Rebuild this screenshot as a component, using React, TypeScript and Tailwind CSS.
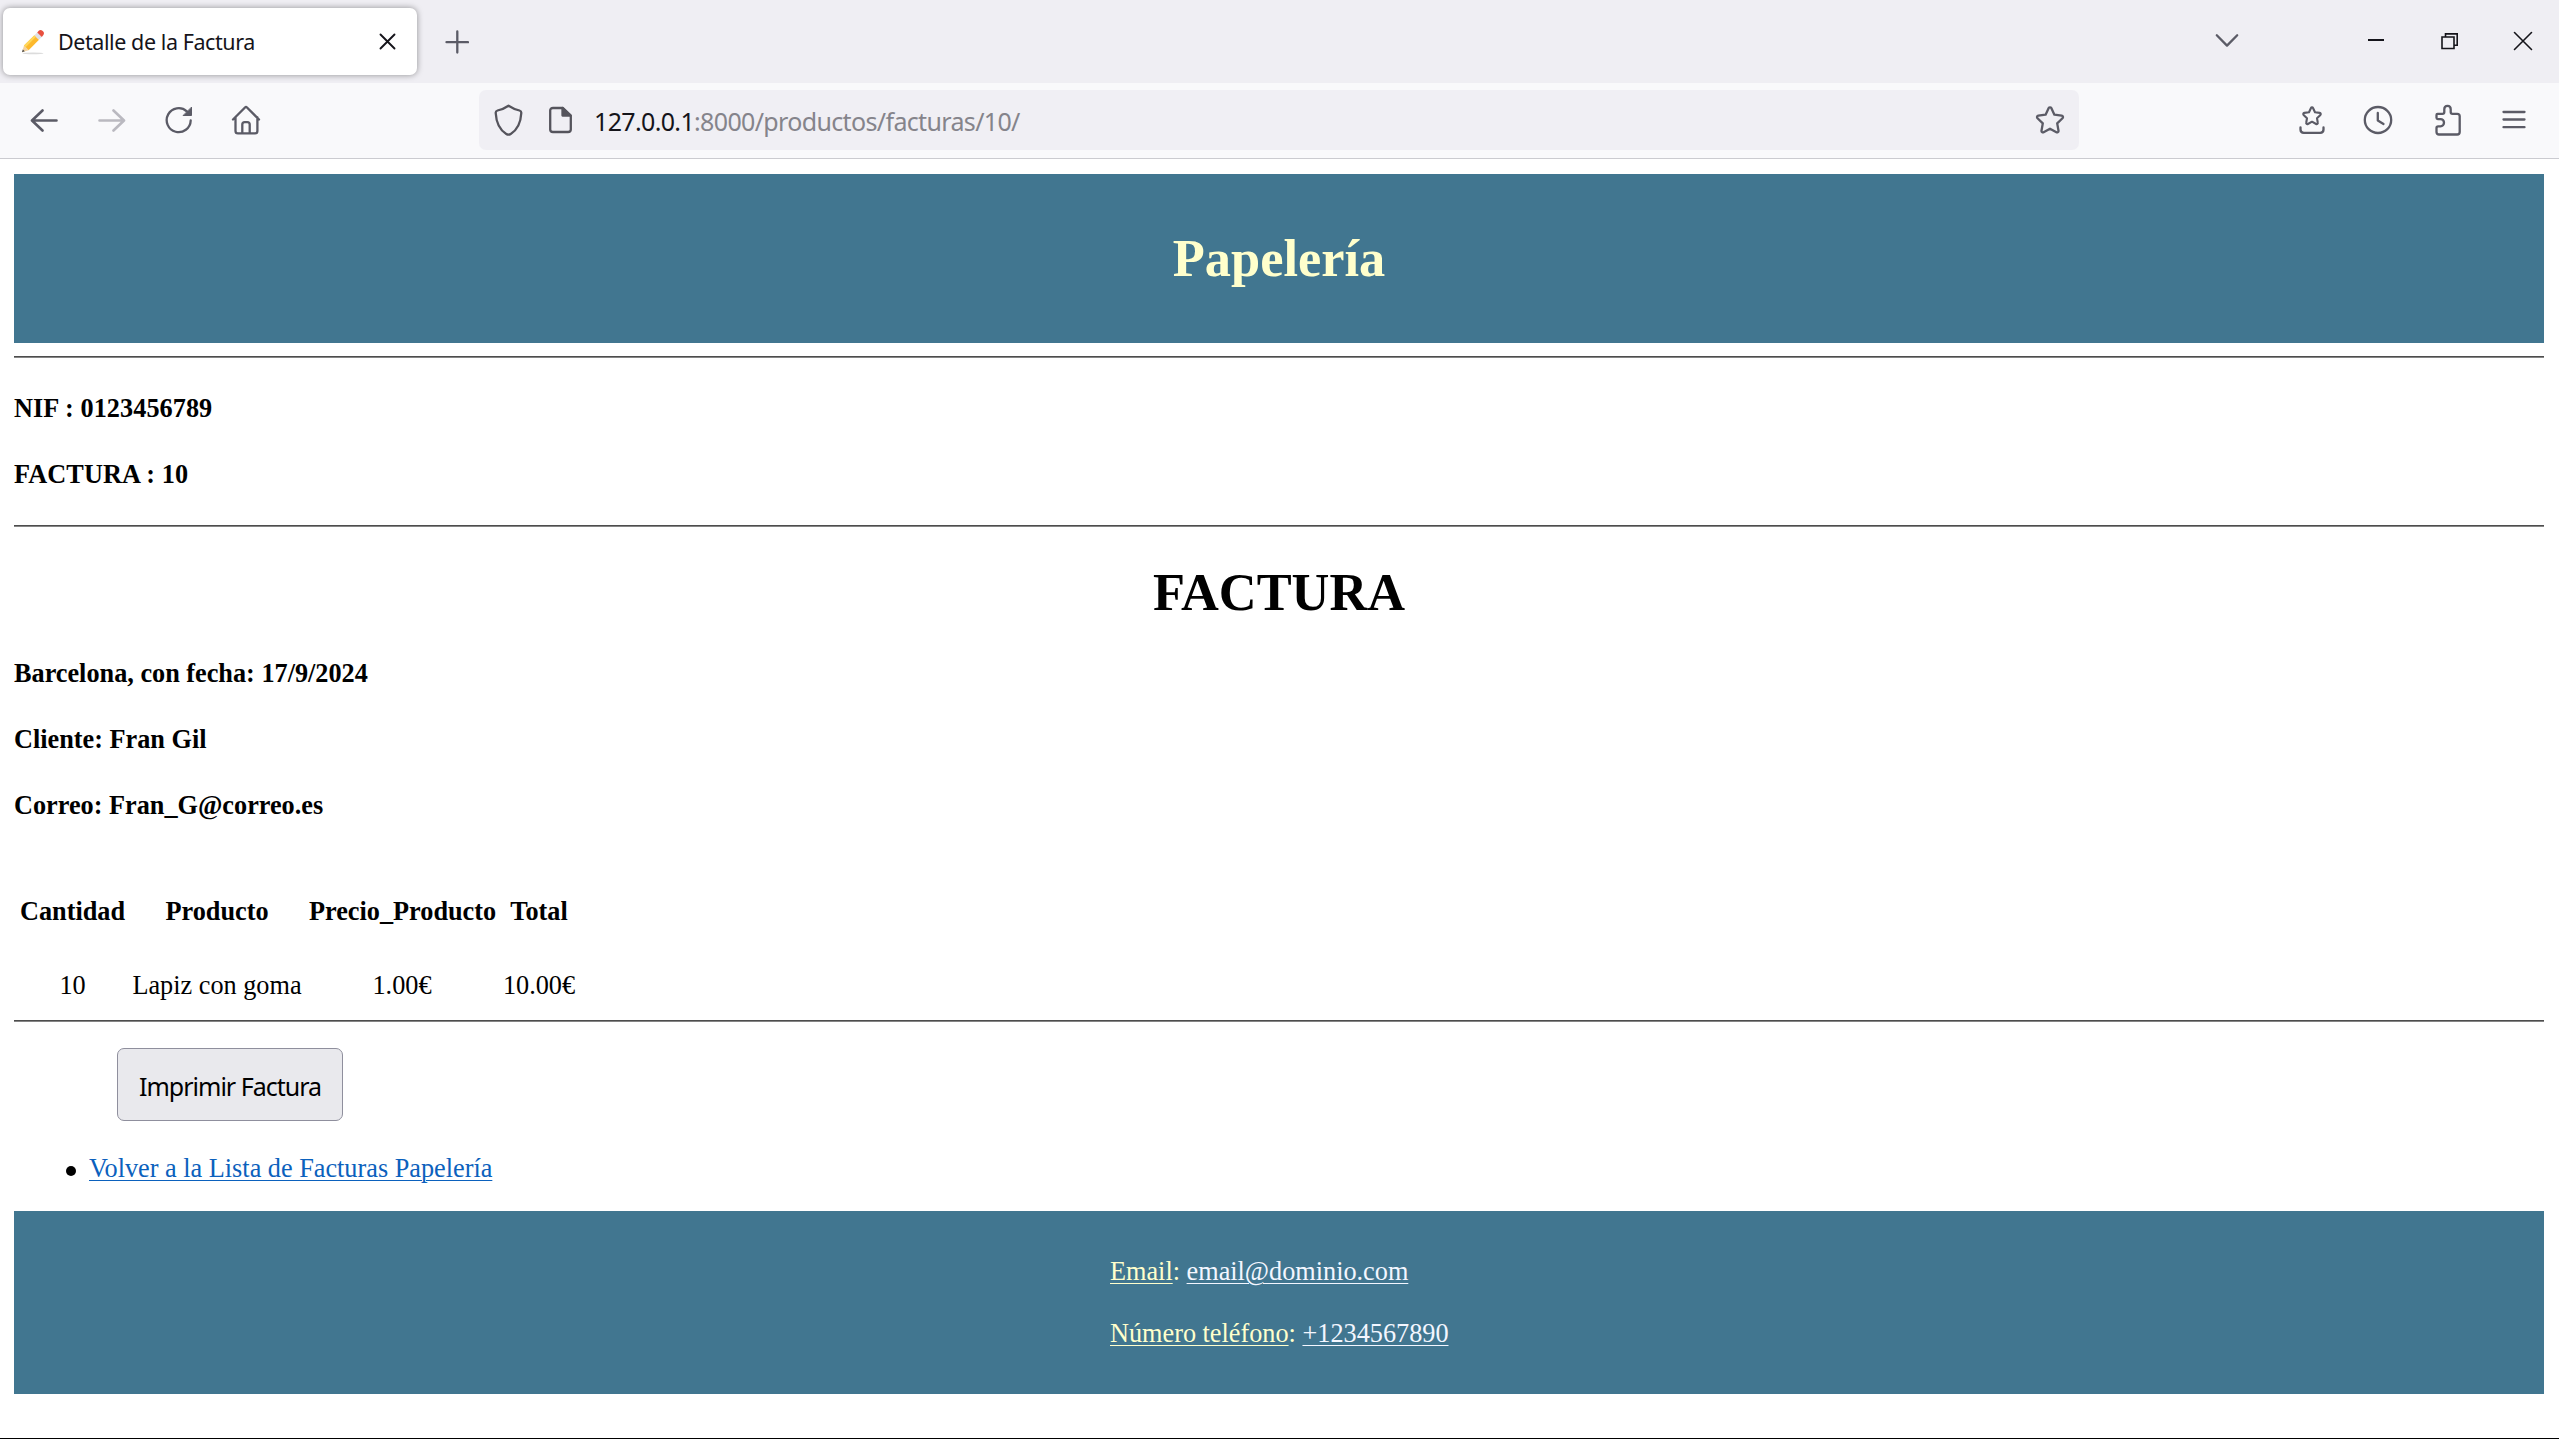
import type { ReactNode } from "react";

type IconProps = { w: number; h: number; className?: string; children: ReactNode };

function Icon({ w, h, className = "", children }: IconProps) {
  return (
    <svg
      width={w}
      height={h}
      viewBox={`0 0 ${w} ${h}`}
      fill="none"
      stroke="currentColor"
      strokeWidth="2.3"
      strokeLinecap="round"
      strokeLinejoin="round"
      className={`block shrink-0 ${className}`}
    >
      {children}
    </svg>
  );
}

const STAR =
  "M13.7 2.1c.5-1.1 2.1-1.1 2.6 0l3.1 6.6 7.3 1c1.2.2 1.7 1.7.8 2.5l-5.3 5.2 1.3 7.3c.2 1.2-1.1 2.1-2.1 1.5L15 22.7l-6.4 3.5c-1 .6-2.3-.3-2.1-1.5l1.3-7.3-5.3-5.2c-.9-.8-.4-2.3.8-2.5l7.3-1z";

function Pencil() {
  return (
    <svg width="24" height="26" viewBox="0 0 24 26" className="block shrink-0">
      <ellipse cx="12" cy="24.4" rx="10.5" ry="0.8" fill="#dcdcdc" />
      <path d="M1 23.2 3 16.6 7.6 21.2z" fill="#f3d3a0" />
      <path d="M1 23.2 1.8 20.4 3.8 22.3z" fill="#4a4a4a" />
      <path d="M3 16.6 13.4 6.2 18 10.8 7.6 21.2z" fill="#fdb92c" />
      <path d="M3 16.6 13.4 6.2 15 7.8 4.6 18.2z" fill="#ffd75a" />
      <path d="M13.4 6.2 16.2 3.4 20.8 8 18 10.8z" fill="#dfe0e6" />
      <path d="M16.2 3.4 18 1.6c1-1 2.5-.8 3.4.2l.8.8c1 1 1 2.4.2 3.4L20.8 8z" fill="#e8503f" />
    </svg>
  );
}

function TabStrip() {
  return (
    <div className="flex h-[83px] items-start bg-[#efeef3] pl-[3px]">
      <div className="mt-2 flex h-[67px] w-[414px] items-center rounded-[7px] bg-white pl-[18px] shadow-[0_0_6px_rgba(0,0,0,0.4)]">
        <Pencil />
        <span className="ml-[13px] w-[200px] whitespace-nowrap pt-px font-['Noto_Sans'] text-[21.5px] leading-[30px] tracking-[-0.42px] text-[#15141a]">
          Detalle de la Factura
        </span>
        <Icon w={17} h={17} className="ml-[121px] text-[#15141a]">
          <path d="M1.5 1.5 15.5 15.5M15.5 1.5 1.5 15.5" strokeWidth="1.9" />
        </Icon>
      </div>
      <Icon w={24} h={24} className="ml-[28px] mt-[30px] text-[#5b5b66]">
        <path d="M12.3 1.5V22.5M1.5 12.2H23" />
      </Icon>
      <div className="ml-auto flex items-start">
        <Icon w={24} h={15} className="mt-[33px] mr-[129px] text-[#5b5b66]">
          <path d="M1.8 2.2 12 12.6 22.2 2.2" />
        </Icon>
        <Icon w={16} h={2} className="mr-[57px] mt-[39px] text-[#15141a]">
          <path d="M0 1H16" strokeWidth="2" strokeLinecap="butt" />
        </Icon>
        <Icon w={18} h={17} className="mr-[54px] mt-[33px] text-[#15141a]">
          <path d="M1 4H13V15.5H1zM4.500 3.500V.9H16.200V12.200H13.500" strokeWidth="1.6" strokeLinejoin="miter" />
        </Icon>
        <Icon w={20} h={20} className="mr-[26px] mt-[31px] text-[#15141a]">
          <path d="M1.5 1.5 18.5 18.5M18.5 1.5 1.5 18.5" strokeWidth="1.6" />
        </Icon>
      </div>
    </div>
  );
}

function Toolbar() {
  return (
    <div className="flex h-[76px] items-start border-b border-[#cbcbd0] bg-[#f9f9fb] pt-[7px] text-[#5b5b66]">
      <div className="flex h-[60px] w-[479px] items-center pl-[30px]">
        <Icon w={28} h={24}>
          <path d="M26.5 12.5H2.5M12.5 2.5 2 12.5 12.5 22.5" strokeWidth="2.6" />
        </Icon>
        <Icon w={28} h={24} className="ml-10 text-[#bab9c0]">
          <path d="M1.5 12.5H25.5M15.5 2.5 26 12.5 15.5 22.5" strokeWidth="2.6" />
        </Icon>
        <Icon w={28} h={28} className="ml-[39px]">
          <path d="M25.7 14.5A12 12 0 1 1 21.8 5.3" />
          <path d="M26.5 1.5V9.5H18.5z" fill="currentColor" strokeWidth="1" />
        </Icon>
        <Icon w={30} h={30} className="ml-[38px]">
          <path d="M2 14.5 14 2.5c.6-.6 1.4-.6 2 0L28 14.5M4.5 12.5V26c0 1.4 1 2.4 2.4 2.4H24c1.4 0 2.4-1 2.4-2.4V12.5M11.3 28V19.5c0-1.4 1-2.4 2.4-2.4h2.6c1.4 0 2.4 1 2.4 2.4V28" />
        </Icon>
      </div>
      <div className="flex h-[60px] w-[1600px] items-center rounded-[7px] bg-[#f0eff4] pl-[15px] pr-[14px]">
        <Icon w={29} h={32} className="text-[#55545c]">
          <path d="M14.5 1.7C12 3.4 7 5.700 3.500 6.500 2.300 6.800 1.600 7.700 1.700 9c.5 9.500 3.600 16.600 10.600 21 1.500.9 2.900.9 4.400 0C23.700 25.600 26.800 18.500 27.300 9c.1-1.300-.6-2.200-1.800-2.500C22 5.700 17 3.400 14.500 1.700z" />
        </Icon>
        <Icon w={25} h={28} className="ml-[25px] text-[#55545c]">
          <path d="M15 2H5C3.300 2 2.200 3 2.200 4.500V23.500C2.200 25 3.300 26 5 26H20c1.700 0 2.800-1 2.800-2.500V9.500z" />
          <path d="M14.500 2V9.500H22.500z" fill="currentColor" />
        </Icon>
        <span className="ml-[21px] whitespace-nowrap pt-[2px] font-['Noto_Sans'] text-[25px] leading-[34px] tracking-[-0.65px] text-[#85848b]">
          <span className="text-[#15141a]">127.0.0.1</span>:8000/productos/facturas/10/
        </span>
        <Icon w={30} h={28} className="ml-auto">
          <path d={STAR} />
        </Icon>
      </div>
      <div className="ml-auto flex h-[60px] items-center pr-[33px]">
        <Icon w={26} h={30}>
          <path
            d="M12 3c.4-.9 1.600-.9 2 0l2 4.300 4.700.6c1 .2 1.400 1.300.7 2l-3.400 3.300.8 4.600c.2 1-.8 1.700-1.700 1.200L13 16.700l-4.100 2.300c-.9.5-1.900-.2-1.700-1.200l.8-4.600L4.600 9.900c-.7-.7-.3-1.800.7-2L10 7.300z"
            strokeWidth="2.1"
          />
          <path d="M1.500 22.500V24.500c0 2 1.300 3.300 3.300 3.300H21.200c2 0 3.300-1.300 3.300-3.300V22.500" />
        </Icon>
        <Icon w={30} h={30} className="ml-[38px]">
          <ellipse cx="15" cy="15" rx="13.200" ry="13" />
          <path d="M14.800 8V15.500L20.500 19" />
        </Icon>
        <Icon w={28} h={32} className="ml-[41px]">
          <path d="M3.500 9.800H8.500c1 0 1.800-.7 1.800-1.800V5.200c0-2 1.400-3.400 3.200-3.400s3.200 1.400 3.200 3.400V8c0 1.100.8 1.800 1.800 1.800H23.200c1.500 0 2.500 1 2.500 2.500V28c0 1.500-1 2.500-2.500 2.500H5c-1.500 0-2.500-1-2.500-2.500V24c0-1 .7-1.700 1.700-1.700H6.500c2 0 3.500-1.600 3.500-3.600s-1.500-3.600-3.500-3.600H3.800c-.9 0-1.300-.5-1.300-1.300V11c0-.8.300-1.200 1-1.200z" />
        </Icon>
        <Icon w={24} h={20} className="ml-[40px]">
          <path d="M1.500 2H22.500M1.500 9.500H22.500M1.500 17.200H22.500" />
        </Icon>
      </div>
    </div>
  );
}

function Rule({ className }: { className: string }) {
  return <hr className={`h-[2px] border-t border-b border-t-[#4d4d4d] border-b-[#858585] ${className}`} />;
}

const COLUMNS = "grid grid-cols-[105px_170px_186px_74px] text-center whitespace-nowrap pl-[6px]";

function Invoice() {
  return (
    <main className="pt-[15px] pl-[14px] pr-[15px] font-['Liberation_Serif'] text-[26.25px] leading-[30px] text-black">
      <header className="h-[169px] bg-[#417690] pt-[54px] text-center">
        <h1 className="text-[52.4px] font-bold leading-[60px] text-[#ffffcc]">Papelería</h1>
      </header>
      <Rule className="mt-[13px]" />
      <h4 className="mt-9 font-bold tracking-[0.06px]">NIF : 0123456789</h4>
      <h4 className="mt-9 font-bold tracking-[0.1px]">FACTURA : 10</h4>
      <Rule className="mt-[35px]" />
      <h1 className="mt-[35px] text-center text-[52.4px] font-bold leading-[60px]">FACTURA</h1>
      <h4 className="mt-[37px] font-bold">Barcelona, con fecha: 17/9/2024</h4>
      <h4 className="mt-9 font-bold">Cliente: Fran Gil</h4>
      <h4 className="mt-9 font-bold">Correo: Fran_G@correo.es</h4>
      <div className={`mt-[76px] gap-x-[7px] font-bold ${COLUMNS}`}>
        <span>Cantidad</span>
        <span>Producto</span>
        <span>Precio_Producto</span>
        <span>Total</span>
      </div>
      <div className={`mt-11 gap-x-[7px] ${COLUMNS}`}>
        <span>10</span>
        <span>Lapiz con goma</span>
        <span>1.00€</span>
        <span>10.00€</span>
      </div>
      <Rule className="mt-[19px]" />
      <button className="ml-[103px] mt-[26px] flex h-[73px] w-[226px] items-center justify-center whitespace-nowrap rounded-[7px] border border-[#8f8f9d] bg-[#e9e9ed] pt-[2px] font-['Noto_Sans'] text-[25px] leading-[34px] tracking-[-1px]">
        Imprimir Factura
      </button>
      <div className="mt-[33px] flex items-center pl-[52px]">
        <span className="mt-[4px] size-[10px] rounded-full bg-black" />
        <a className="ml-[13px] text-[#0b61bd] underline decoration-1 underline-offset-[3px]">
          Volver a la Lista de Facturas Papelería
        </a>
      </div>
      <footer className="mt-[27px] flex h-[183px] flex-col bg-[#417690] pl-[1096px] pt-[46px] text-[#ffffcc]">
        <p>
          <span className="underline decoration-1 underline-offset-[3px]">Email</span>:{" "}
          <a className="text-[#f3f6ff] underline decoration-1 underline-offset-[3px]">email@dominio.com</a>
        </p>
        <p className="mt-8">
          <span className="underline decoration-1 underline-offset-[3px]">Número teléfono</span>:{" "}
          <a className="text-[#f3f6ff] underline decoration-1 underline-offset-[3px]">+1234567890</a>
        </p>
      </footer>
    </main>
  );
}

export default function App() {
  return (
    <div className="h-[1439px] w-[2559px] overflow-hidden border-b border-black bg-white">
      <TabStrip />
      <Toolbar />
      <Invoice />
    </div>
  );
}
